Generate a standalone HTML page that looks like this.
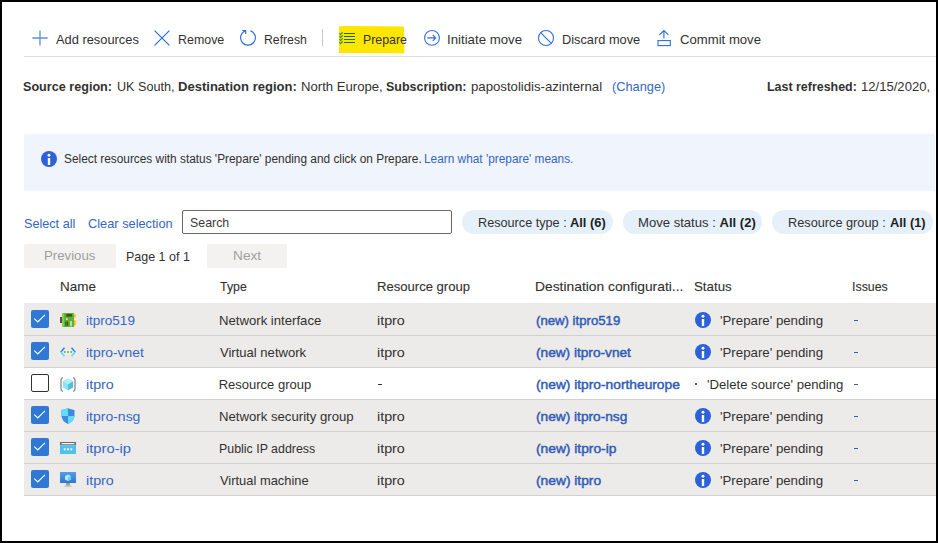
<!DOCTYPE html>
<html><head><meta charset="utf-8">
<style>
html,body{margin:0;padding:0;}
body{width:938px;height:543px;position:relative;overflow:hidden;background:#fff;font-family:"Liberation Sans",sans-serif;color:#323130;}
.t{position:absolute;white-space:nowrap;font-size:13px;line-height:16px;transform-origin:0 0;}
.b{font-weight:bold;}
.sb{-webkit-text-stroke:0.45px currentColor;}

.lk{color:#3566c4;}
.lk.sb{color:#2f5cb6;}
.dk{color:#201f1e;}
.dis{color:#a19f9d;}
.hd{color:#323130;-webkit-text-stroke:0.1px #323130;}
.abs{position:absolute;}
svg{position:absolute;overflow:visible;}
#frame{position:absolute;left:0;top:0;width:938px;height:543px;box-sizing:border-box;border:2px solid #000;z-index:50;}
.row{position:absolute;left:24px;width:912px;height:32px;}
.sel{background:#edebe9;}
.cb{position:absolute;left:31px;width:18px;height:18px;box-sizing:border-box;border-radius:2px;}
.cbon{background:#3078d3;}
.cboff{border:1px solid #323130;background:#fff;}
.pill{position:absolute;top:210px;height:24px;border-radius:12px;background:#e6f0fa;}
.btn{position:absolute;top:244px;height:24px;background:#f3f2f1;border-radius:2px;}
</style></head>
<body>
<div id="frame"></div>
<svg style="left:32px;top:30px" width="16" height="16" viewBox="0 0 16 16"><path d="M8 0.4V15.6M0.4 8H15.6" stroke="#5c8fdb" stroke-width="1.3" fill="none"/></svg>
<svg style="left:154px;top:30px" width="16" height="16" viewBox="0 0 16 16"><path d="M0.6 0.6L15.4 15.4M15.4 0.6L0.6 15.4" stroke="#2f6fd6" stroke-width="1.25" fill="none"/></svg>
<svg style="left:240px;top:30px" width="16" height="16" viewBox="0 0 16 16"><path d="M10.4 0.7A7.4 7.4 0 1 1 5.6 0.7" stroke="#2f6fd6" stroke-width="1.15" fill="none"/><path d="M2.2 0.5H5.7V4" stroke="#2f6fd6" stroke-width="1.2" fill="none"/></svg>
<div class="abs" style="left:322px;top:29px;width:1px;height:17px;background:#c8c6c4"></div>
<svg style="left:339px;top:26px" width="66" height="28" viewBox="0 0 66 28"><path d="M0 0.3 L8 0 L40 0.2 L65 0.4 L65.3 27.5 L50 27.2 L0 27 Z" fill="#ffe600"/></svg>
<svg style="left:339px;top:32px" width="17" height="12" viewBox="0 0 17 12"><path d="M5 1.5H16M5 4.5H16M5 7.5H16M5 10.5H16" stroke="#1e6b00" stroke-width="1.1" fill="none"/><path d="M0.4 1.3L1.6 2.6L3.7 0.3M0.4 4.3L1.6 5.6L3.7 3.3M0.4 7.3L1.6 8.6L3.7 6.3M0.4 10.3L1.6 11.6L3.7 9.3" stroke="#4a9a0c" stroke-width="1.35" fill="none"/></svg>
<svg style="left:424px;top:30px" width="16" height="16" viewBox="0 0 16 16"><circle cx="8" cy="7.9" r="7.4" stroke="#2f6fd6" stroke-width="1.1" fill="none"/><path d="M3.3 7.9H11.6M8.8 5L11.7 7.9L8.8 10.8" stroke="#2f6fd6" stroke-width="1.1" fill="none"/></svg>
<svg style="left:538px;top:30px" width="16" height="16" viewBox="0 0 16 16"><circle cx="8" cy="8" r="7.5" stroke="#2f6fd6" stroke-width="1.1" fill="none"/><path d="M2.7 2.7L13.3 13.3" stroke="#2f6fd6" stroke-width="1.1" fill="none"/></svg>
<svg style="left:656px;top:30px" width="16" height="16" viewBox="0 0 16 16"><path d="M7.9 0.8V8.6M3.4 4.8L7.9 0.5L12.4 4.8" stroke="#2f6fd6" stroke-width="1.1" fill="none"/><rect x="2" y="10.6" width="12.3" height="5" stroke="#2f6fd6" stroke-width="1.1" fill="none"/></svg>
<div class="abs" style="left:24px;top:56px;width:912px;height:1px;background:#e1dfdd"></div>
<div class="abs" style="left:24px;top:134px;width:911px;height:57px;background:#eff4fd"></div>
<svg style="left:41px;top:151px" width="16" height="16" viewBox="0 0 16 16"><circle cx="8" cy="8" r="8" fill="#2c62d8"/><circle cx="8" cy="4.3" r="1.45" fill="#fff"/><rect x="6.8" y="7" width="2.4" height="7" fill="#fff"/></svg>
<div class="abs" style="left:182px;top:210px;width:270px;height:24px;box-sizing:border-box;border:1px solid #6b6a69;border-radius:2px"></div>
<div class="pill" style="left:462px;width:151px"></div>
<div class="pill" style="left:623px;width:139px"></div>
<div class="pill" style="left:772px;width:161px"></div>
<div class="btn" style="left:24px;width:92px"></div>
<div class="btn" style="left:207px;width:80px"></div>
<div class="row sel" style="top:303px"></div>
<div class="row sel" style="top:335px"></div>
<div class="row" style="top:367px"></div>
<div class="row sel" style="top:399px"></div>
<div class="row sel" style="top:431px"></div>
<div class="row sel" style="top:463px"></div>
<div class="abs" style="left:24px;top:335px;width:912px;height:1px;background:#d2d0ce"></div>
<div class="abs" style="left:24px;top:367px;width:912px;height:1px;background:#d2d0ce"></div>
<div class="abs" style="left:24px;top:399px;width:912px;height:1px;background:#d2d0ce"></div>
<div class="abs" style="left:24px;top:431px;width:912px;height:1px;background:#d2d0ce"></div>
<div class="abs" style="left:24px;top:463px;width:912px;height:1px;background:#d2d0ce"></div>
<div class="abs" style="left:24px;top:495px;width:912px;height:1px;background:#d2d0ce"></div>
<div class="cb cbon" style="top:310px"><svg style="left:0;top:0" width="18" height="18" viewBox="0 0 18 18"><path d="M3.3 8.6L6.8 12L14 4.8" stroke="#fff" stroke-width="1.1" fill="none"/></svg></div>
<svg style="left:60px;top:313px" width="16" height="14" viewBox="0 0 16 14"><rect x="0" y="4" width="2" height="6" fill="#505050"/><rect x="14" y="1.4" width="1.8" height="3" fill="#f7c600"/><rect x="14" y="7.2" width="1.8" height="5.2" fill="#f7c600"/><rect x="2" y="0" width="12" height="14" fill="#62ad38"/><rect x="2" y="0" width="2.2" height="14" fill="#8ccb45"/><rect x="6.3" y="1.1" width="5.7" height="2.5" fill="#2c5a12"/><rect x="5.2" y="8.6" width="1.2" height="4.2" fill="#2c5a12"/><rect x="6.9" y="8.6" width="1.2" height="4.2" fill="#2c5a12"/><circle cx="6.9" cy="6.1" r="0.9" fill="#eaf6e0"/><rect x="10" y="8" width="2" height="5.4" fill="#b9de98"/></svg>
<svg style="left:695px;top:312px" width="16" height="16" viewBox="0 0 16 16"><circle cx="8" cy="8" r="8" fill="#2c62d8"/><circle cx="8" cy="4.3" r="1.45" fill="#fff"/><rect x="6.8" y="7" width="2.4" height="7" fill="#fff"/></svg>
<div class="abs" style="left:854px;top:320px;width:4px;height:1px;background:#2b63c6"></div>
<div class="cb cbon" style="top:342px"><svg style="left:0;top:0" width="18" height="18" viewBox="0 0 18 18"><path d="M3.3 8.6L6.8 12L14 4.8" stroke="#fff" stroke-width="1.1" fill="none"/></svg></div>
<svg style="left:60px;top:347px" width="16" height="10" viewBox="0 0 16 10"><path d="M4.5 0.7L0.8 5" stroke="#2b82e0" stroke-width="1.5" fill="none"/><path d="M0.8 5L4.5 9.3" stroke="#5ad7fa" stroke-width="1.5" fill="none"/><path d="M11.5 0.7L15.2 5" stroke="#2b82e0" stroke-width="1.5" fill="none"/><path d="M15.2 5L11.5 9.3" stroke="#5ad7fa" stroke-width="1.5" fill="none"/><circle cx="4.7" cy="5" r="0.95" fill="#6cb23a"/><circle cx="8" cy="5" r="0.95" fill="#6cb23a"/><circle cx="11.3" cy="5" r="0.95" fill="#6cb23a"/></svg>
<svg style="left:695px;top:344px" width="16" height="16" viewBox="0 0 16 16"><circle cx="8" cy="8" r="8" fill="#2c62d8"/><circle cx="8" cy="4.3" r="1.45" fill="#fff"/><rect x="6.8" y="7" width="2.4" height="7" fill="#fff"/></svg>
<div class="abs" style="left:854px;top:352px;width:4px;height:1px;background:#2b63c6"></div>
<div class="cb cboff" style="top:374px"></div>
<svg style="left:60px;top:377px" width="16" height="15" viewBox="0 0 16 15"><path d="M3 0.7Q1 1 1 3V12Q1 14 3 14.3M13 0.7Q15 1 15 3V12Q15 14 13 14.3" stroke="#8a8886" stroke-width="1.3" fill="none"/><path d="M8 1.5L13 4.3V10.5L8 13.3L3 10.5V4.3Z" fill="#8be3f7"/><path d="M8 7.3L13 4.3V10.5L8 13.3Z" fill="#50c0e0"/><path d="M3 4.3L8 1.5L13 4.3L8 7.3Z" fill="#b0ecfa"/></svg>
<div class="abs" style="left:695px;top:383px;width:2px;height:2px;background:#3b5bdb"></div>
<div class="abs" style="left:378px;top:384px;width:4px;height:1px;background:#323130"></div>
<div class="abs" style="left:854px;top:384px;width:4px;height:1px;background:#2b63c6"></div>
<div class="cb cbon" style="top:406px"><svg style="left:0;top:0" width="18" height="18" viewBox="0 0 18 18"><path d="M3.3 8.6L6.8 12L14 4.8" stroke="#fff" stroke-width="1.1" fill="none"/></svg></div>
<svg style="left:61px;top:408px" width="14" height="16" viewBox="0 0 14 16"><path d="M7 0.3Q4 1.5 0.5 2V8Q0.8 13 7 16Q13.2 13 13.5 8V2Q10 1.5 7 0.3Z" fill="#3f8ae0"/><path d="M7 0.3Q4 1.5 0.5 2V8H7Z" fill="#63dcfa"/><path d="M7 8H13.5Q13.2 13 7 16Z" fill="#63dcfa"/></svg>
<svg style="left:695px;top:408px" width="16" height="16" viewBox="0 0 16 16"><circle cx="8" cy="8" r="8" fill="#2c62d8"/><circle cx="8" cy="4.3" r="1.45" fill="#fff"/><rect x="6.8" y="7" width="2.4" height="7" fill="#fff"/></svg>
<div class="abs" style="left:854px;top:416px;width:4px;height:1px;background:#2b63c6"></div>
<div class="cb cbon" style="top:438px"><svg style="left:0;top:0" width="18" height="18" viewBox="0 0 18 18"><path d="M3.3 8.6L6.8 12L14 4.8" stroke="#fff" stroke-width="1.1" fill="none"/></svg></div>
<svg style="left:60px;top:442px" width="16" height="12" viewBox="0 0 16 12"><rect x="0" y="0" width="16" height="3.2" fill="#6b6b6b"/><rect x="1.5" y="1" width="13" height="1.3" fill="#f2f2f2"/><rect x="0" y="3.2" width="16" height="8.8" fill="#50c3ec"/><circle cx="4.7" cy="7.3" r="1.1" fill="#fff"/><circle cx="8" cy="7.3" r="1.1" fill="#fff"/><circle cx="11.3" cy="7.3" r="1.1" fill="#fff"/></svg>
<svg style="left:695px;top:440px" width="16" height="16" viewBox="0 0 16 16"><circle cx="8" cy="8" r="8" fill="#2c62d8"/><circle cx="8" cy="4.3" r="1.45" fill="#fff"/><rect x="6.8" y="7" width="2.4" height="7" fill="#fff"/></svg>
<div class="abs" style="left:854px;top:448px;width:4px;height:1px;background:#2b63c6"></div>
<div class="cb cbon" style="top:470px"><svg style="left:0;top:0" width="18" height="18" viewBox="0 0 18 18"><path d="M3.3 8.6L6.8 12L14 4.8" stroke="#fff" stroke-width="1.1" fill="none"/></svg></div>
<svg style="left:60px;top:472px" width="16" height="15" viewBox="0 0 16 15"><defs><linearGradient id="vmg" x1="0" y1="0" x2="0" y2="1"><stop offset="0" stop-color="#5a9be6"/><stop offset="1" stop-color="#2f76d4"/></linearGradient></defs><rect x="0" y="0" width="16" height="11" fill="url(#vmg)"/><path d="M8 2.5L11 4V7.5L8 9L5 7.5V4Z" fill="#a8ecfb"/><path d="M8 5.5L11 4V7.5L8 9Z" fill="#5ad7f5"/><rect x="6" y="11" width="4" height="2.5" fill="#9e9e9e"/><rect x="4.5" y="13.5" width="7" height="1.3" fill="#bdbdbd"/></svg>
<svg style="left:695px;top:472px" width="16" height="16" viewBox="0 0 16 16"><circle cx="8" cy="8" r="8" fill="#2c62d8"/><circle cx="8" cy="4.3" r="1.45" fill="#fff"/><rect x="6.8" y="7" width="2.4" height="7" fill="#fff"/></svg>
<div class="abs" style="left:854px;top:480px;width:4px;height:1px;background:#2b63c6"></div>
<div class="t " style="left:56.0px;top:32px;transform:scaleX(0.988);">Add resources</div>
<div class="t " style="left:177.54px;top:32px;transform:scaleX(0.9553);">Remove</div>
<div class="t " style="left:263.66px;top:32px;transform:scaleX(0.9409);">Refresh</div>
<div class="t " style="left:363.35px;top:32px;transform:scaleX(0.9489);">Prepare</div>
<div class="t " style="left:446.98px;top:32px;transform:scaleX(1.0181);">Initiate move</div>
<div class="t " style="left:562.02px;top:32px;transform:scaleX(0.9833);">Discard move</div>
<div class="t " style="left:679.79px;top:32px;transform:scaleX(1.0101);">Commit move</div>
<div class="t b" style="left:22.83px;top:79px;transform:scaleX(0.97);">Source region:</div>
<div class="t " style="left:116.53px;top:79px;transform:scaleX(0.9719);">UK South,</div>
<div class="t b" style="left:178.3px;top:79px;transform:scaleX(1.0034);">Destination region:</div>
<div class="t " style="left:300.89px;top:79px;transform:scaleX(1.0101);">North Europe,</div>
<div class="t b" style="left:386.24px;top:79px;transform:scaleX(0.961);">Subscription:</div>
<div class="t " style="left:471.49px;top:79px;transform:scaleX(1.0133);">papostolidis-azinternal</div>
<div class="t lk" style="left:612.22px;top:79px;transform:scaleX(0.9846);">(Change)</div>
<div class="t b" style="left:767.04px;top:79px;transform:scaleX(0.9565);">Last refreshed:</div>
<div class="t " style="left:860.99px;top:79px;transform:scaleX(1.006);">12/15/2020,</div>
<div class="t " style="left:64.31px;top:151px;font-size:12px;transform:scaleX(0.9878);">Select resources with status 'Prepare' pending and click on Prepare.</div>
<div class="t lk" style="left:423.71px;top:151px;font-size:12px;transform:scaleX(0.9872);">Learn what 'prepare' means.</div>
<div class="t lk" style="left:23.63px;top:216px;transform:scaleX(0.9725);">Select all</div>
<div class="t lk" style="left:87.62px;top:216px;transform:scaleX(0.9845);">Clear selection</div>
<div class="t " style="left:190.15px;top:215px;transform:scaleX(0.9525);color:#3b3a39">Search</div>
<div class="t " style="left:477.83px;top:215px;transform:scaleX(0.9742);">Resource type :</div>
<div class="t b dk" style="left:570.0px;top:215px;transform:scaleX(0.9889);">All (6)</div>
<div class="t " style="left:638.29px;top:215px;transform:scaleX(1.0067);">Move status :</div>
<div class="t b dk" style="left:719.6px;top:215px;">All (2)</div>
<div class="t " style="left:788.32px;top:215px;transform:scaleX(0.9796);">Resource group :</div>
<div class="t b dk" style="left:890.3px;top:215px;transform:scaleX(0.9833);">All (1)</div>
<div class="t dis" style="left:44.38px;top:248px;transform:scaleX(1.0163);">Previous</div>
<div class="t " style="left:125.74px;top:249px;transform:scaleX(0.96);">Page 1 of 1</div>
<div class="t dis" style="left:233.15px;top:248px;transform:scaleX(1.0538);">Next</div>
<div class="t hd" style="left:59.96px;top:279px;transform:scaleX(1.0364);">Name</div>
<div class="t hd" style="left:219.8px;top:279px;transform:scaleX(0.9536);">Type</div>
<div class="t hd" style="left:376.69px;top:279px;transform:scaleX(1.0055);">Resource group</div>
<div class="t hd" style="left:535.34px;top:279px;transform:scaleX(1.0635);">Destination configurati...</div>
<div class="t hd" style="left:694.08px;top:279px;transform:scaleX(1.0229);">Status</div>
<div class="t hd" style="left:852.35px;top:279px;transform:scaleX(0.9528);">Issues</div>
<div class="t lk" style="left:85.96px;top:313px;transform:scaleX(1.0413);">itpro519</div>
<div class="t " style="left:218.69px;top:313px;transform:scaleX(1.011);">Network interface</div>
<div class="t " style="left:376.6px;top:313px;transform:scaleX(1.1);">itpro</div>
<div class="t lk sb" style="left:536.4px;top:313px;transform:scaleX(1.0133);">(new) itpro519</div>
<div class="t " style="left:720.28px;top:313px;transform:scaleX(1.0192);">'Prepare' pending</div>
<div class="t lk" style="left:85.93px;top:345px;transform:scaleX(1.066);">itpro-vnet</div>
<div class="t " style="left:219.7px;top:345px;transform:scaleX(1.0035);">Virtual network</div>
<div class="t " style="left:376.6px;top:345px;transform:scaleX(1.1);">itpro</div>
<div class="t lk sb" style="left:536.4px;top:345px;transform:scaleX(1.0505);">(new) itpro-vnet</div>
<div class="t " style="left:720.28px;top:345px;transform:scaleX(1.0192);">'Prepare' pending</div>
<div class="t lk" style="left:85.9px;top:377px;transform:scaleX(1.1);">itpro</div>
<div class="t " style="left:218.7px;top:377px;">Resource group</div>
<div class="t lk sb" style="left:536.4px;top:377px;transform:scaleX(1.0588);">(new) itpro-northeurope</div>
<div class="t " style="left:706.99px;top:377px;transform:scaleX(1.0098);">'Delete source' pending</div>
<div class="t lk" style="left:85.92px;top:409px;transform:scaleX(1.0755);">itpro-nsg</div>
<div class="t " style="left:218.69px;top:409px;transform:scaleX(1.0129);">Network security group</div>
<div class="t " style="left:376.6px;top:409px;transform:scaleX(1.1);">itpro</div>
<div class="t lk sb" style="left:536.4px;top:409px;transform:scaleX(1.0535);">(new) itpro-nsg</div>
<div class="t " style="left:720.28px;top:409px;transform:scaleX(1.0192);">'Prepare' pending</div>
<div class="t lk" style="left:85.87px;top:441px;transform:scaleX(1.1342);">itpro-ip</div>
<div class="t " style="left:218.75px;top:441px;transform:scaleX(0.953);">Public IP address</div>
<div class="t " style="left:376.6px;top:441px;transform:scaleX(1.1);">itpro</div>
<div class="t lk sb" style="left:536.4px;top:441px;transform:scaleX(1.0592);">(new) itpro-ip</div>
<div class="t " style="left:720.28px;top:441px;transform:scaleX(1.0192);">'Prepare' pending</div>
<div class="t lk" style="left:85.9px;top:473px;transform:scaleX(1.1);">itpro</div>
<div class="t " style="left:219.7px;top:473px;transform:scaleX(0.9921);">Virtual machine</div>
<div class="t " style="left:376.6px;top:473px;transform:scaleX(1.1);">itpro</div>
<div class="t lk sb" style="left:536.4px;top:473px;transform:scaleX(1.0607);">(new) itpro</div>
<div class="t " style="left:720.28px;top:473px;transform:scaleX(1.0192);">'Prepare' pending</div>
</body></html>
